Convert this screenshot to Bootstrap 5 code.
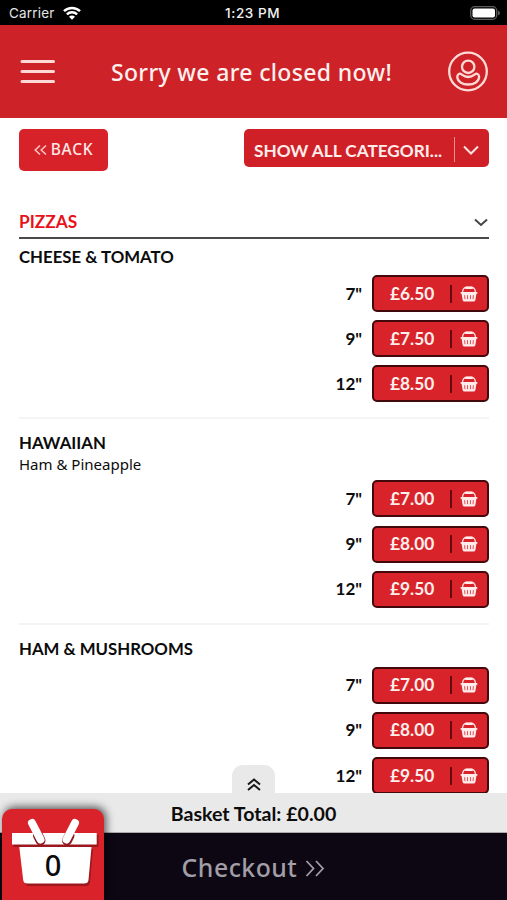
<!DOCTYPE html>
<html lang="en">
<head>
<meta charset="utf-8">
<meta name="viewport" content="width=device-width, initial-scale=1">
<title>Menu</title>
<link href="https://cdn.jsdelivr.net/npm/bootstrap@5.3.0/dist/css/bootstrap.min.css" rel="stylesheet">
<style>
body{font-family:Lato,sans-serif;color:#0c0c0c;background:#fff}
.screen{height:900px}
.humanist{font-family:"Noto Sans","Open Sans",sans-serif}
.status{height:25px;background:#000;color:#e4e4e4;font:13.5px/25px Inter,sans-serif;letter-spacing:.2px;padding:1px 7px 0 9px}
.clock{color:#f2f2f2;font-weight:500;left:225px;top:1px;letter-spacing:.6px}
.topbar{height:93px;background:#cd2228;padding:0 18px 0 20px}
.topbar h1{font-size:23px;letter-spacing:.35px;color:#fff0ee;font-weight:500;line-height:30px}
.page{padding:11px 18px 0 19px;min-height:0}
.btn-back{width:89px;height:42px;background:#d8222a;color:#ffe9e7;border-radius:5px;font-size:15.5px;font-weight:500;letter-spacing:.7px}
.pick{width:245px;height:38px;background:#cf2027;color:#ffedeb;border-radius:5px;font-size:17.2px;font-weight:700;padding:3px 10px 0 10px}
.pick .text-nowrap{padding-top:3px}
.pick .rule{width:1px;height:25px;background:#ee8e8e}
.cat{margin-top:40px;height:28px;border-bottom:2px solid #4a4a4a;color:#e8131a;font-size:17.3px;font-weight:700;padding:0 1px 4px 0}
.dish{padding:13px 0 15px;border-bottom:2px solid #f4f4f4}
.dish:first-child{padding-top:7px}
.dish h3{font-size:16.8px;line-height:22px;font-weight:700;margin:0}
.dish p{font-size:15px;line-height:23px;margin:-1px 0 -3px}
.sizes{margin-top:7px;gap:8.2px}
.size-row{gap:10px;font-size:17px;font-weight:700;line-height:20px}
.price{width:117px;height:37px;background:#d9232a;border:2px solid #42090c;border-radius:5px;color:#fff0ee;padding:0 9px 0 16px;font-size:17.3px;font-weight:700}
.price .rule{width:2px;height:18px;background:#650b10}
.total{height:40px;background:#e9e9e9;font-size:19.6px;font-weight:700;border-bottom:1px solid #aaa;padding-top:2px}
.pull{width:43px;height:29px;left:232px;top:-28px;background:#e9e9e9;border-radius:11px 11px 0 0;padding-top:10px}
.checkout{height:67px;background:#0c0713;color:#a29ea6;font-size:24.8px;font-weight:500;letter-spacing:.5px;padding-top:3px}
.tile{left:2px;bottom:0;width:102px;height:91px;background:#d9222a;border-radius:10px 10px 0 0;box-shadow:2px -2px 9px rgba(0,0,0,.65)}
.count{left:0;width:102px;top:37px;font-size:29px;font-weight:500;line-height:38px;color:#0a0a0a}
</style>
<script src="https://cdn.jsdelivr.net/npm/bootstrap@5.3.0/dist/js/bootstrap.bundle.min.js"></script>
</head>
<body>
<svg width="0" height="0" class="position-absolute" aria-hidden="true">
  <symbol id="basket" viewBox="0 0 18 16">
    <path d="M2.500 6.500C2.700 3 4.500 1.500 6.500 1.500h5c2 0 3.800 1.500 4 5" fill="none" stroke="#ffdcd9" stroke-width="1.300"/>
    <rect x="5" y=".4" width="8" height="2.600" rx="1.200" fill="#ffeceb"/>
    <path d="M1.300 6h15.400q.8 0 .8.900t-.8.900h-.3l-1 6.300q-.2 1.400-1.400 1.400H4q-1.200 0-1.400-1.400l-1-6.300h-.3q-.8 0-.8-.9t.8-.9z" fill="#ffeceb"/>
    <path d="M4.600 9.200l.4 4M7.500 9.200l.1 4M10.500 9.200l-.1 4M13.400 9.200l-.4 4" stroke="#df5055" stroke-width="1"/>
  </symbol>
</svg>
<div class="screen d-flex flex-column overflow-hidden position-relative">
  <div class="status d-flex align-items-center justify-content-between flex-shrink-0 position-relative">
    <span class="d-flex align-items-center"><span>Carrier</span>
      <svg class="ms-2" width="18" height="14" viewBox="0 0 18 14" fill="none" stroke="#fff" stroke-width="2.500"><path d="M1 5.200a11.300 11.300 0 0 1 16 0M3.900 8.400a7.200 7.200 0 0 1 10.200 0"/><path d="M9 13.700 6 10.700a4.200 4.200 0 0 1 6 0z" fill="#fff" stroke="none"/></svg></span>
    <span class="clock position-absolute">1:23 PM</span>
    <svg width="30" height="14" viewBox="0 0 30 14"><rect x=".7" y=".7" width="26" height="12.600" rx="4" fill="none" stroke="#5c5c5c" stroke-width="1.300"/><rect x="2.500" y="2.500" width="22.500" height="9" rx="2" fill="#fff"/><path d="M28 4.500q2 1 2 2.500t-2 2.500z" fill="#5c5c5c"/></svg>
  </div>
  <header class="topbar d-flex align-items-center justify-content-between flex-shrink-0">
    <svg width="36" height="26" viewBox="0 0 36 26" stroke="#ffd9d6" stroke-width="3" stroke-linecap="round"><path d="M2 2.500h31.500M2 12.500h31.500M2 22.500h31.500"/></svg>
    <h1 class="humanist m-0">Sorry we are closed now!</h1>
    <svg width="42" height="42" viewBox="0 0 42 42" fill="none" stroke="#ffd9d6" stroke-width="2.300"><circle cx="21" cy="20.500" r="18.800"/><circle cx="21.200" cy="15.800" r="6.200"/><path d="M13 22.600c-1.600 0-2.700 1.700-2.700 3.500 0 4.400 5 7.400 10.900 7.400s10.900-3 10.900-7.400c0-1.800-1.100-3.500-2.700-3.500-1.700 0-3 3.400-8.200 3.400s-6.500-3.400-8.200-3.400z"/></svg>
  </header>
  <main class="page flex-grow-1 overflow-hidden">
    <div class="d-flex justify-content-between align-items-start">
      <button class="btn-back humanist btn border-0 p-0 d-flex align-items-center justify-content-center"><svg class="me-1" width="13" height="12" viewBox="0 0 13 12" fill="none" stroke="#ffc9c6" stroke-width="1.500"><path d="M6 1.500 1.200 6 6 10.500M12 1.500 7.200 6l4.800 4.500"/></svg>BACK</button>
      <button class="pick btn border-0 d-flex align-items-center"><span class="text-nowrap">SHOW ALL CATEGORI...</span><span class="rule ms-auto me-2"></span><svg width="16" height="10" viewBox="0 0 16 10" fill="none" stroke="#ffe3e1" stroke-width="2"><path d="m1 1.500 7 7 7-7"/></svg></button>
    </div>
    <div class="cat d-flex align-items-center justify-content-between"><span>PIZZAS</span><svg width="14" height="9" viewBox="0 0 14 9" fill="none" stroke="#444" stroke-width="2"><path d="m1 1.500 6 5.500 6-5.500"/></svg></div>
    <section>
      <article class="dish">
        <h3>CHEESE &amp; TOMATO</h3>
        <div class="sizes d-flex flex-column">
          <div class="size-row d-flex align-items-center justify-content-end"><span>7"</span><button class="price btn d-flex align-items-center"><span>£6.50</span><span class="rule ms-auto me-2"></span><svg width="18" height="16"><use href="#basket"/></svg></button></div>
          <div class="size-row d-flex align-items-center justify-content-end"><span>9"</span><button class="price btn d-flex align-items-center"><span>£7.50</span><span class="rule ms-auto me-2"></span><svg width="18" height="16"><use href="#basket"/></svg></button></div>
          <div class="size-row d-flex align-items-center justify-content-end"><span>12"</span><button class="price btn d-flex align-items-center"><span>£8.50</span><span class="rule ms-auto me-2"></span><svg width="18" height="16"><use href="#basket"/></svg></button></div>
        </div>
      </article>
      <article class="dish">
        <h3>HAWAIIAN</h3>
        <p class="humanist">Ham &amp; Pineapple</p>
        <div class="sizes d-flex flex-column">
          <div class="size-row d-flex align-items-center justify-content-end"><span>7"</span><button class="price btn d-flex align-items-center"><span>£7.00</span><span class="rule ms-auto me-2"></span><svg width="18" height="16"><use href="#basket"/></svg></button></div>
          <div class="size-row d-flex align-items-center justify-content-end"><span>9"</span><button class="price btn d-flex align-items-center"><span>£8.00</span><span class="rule ms-auto me-2"></span><svg width="18" height="16"><use href="#basket"/></svg></button></div>
          <div class="size-row d-flex align-items-center justify-content-end"><span>12"</span><button class="price btn d-flex align-items-center"><span>£9.50</span><span class="rule ms-auto me-2"></span><svg width="18" height="16"><use href="#basket"/></svg></button></div>
        </div>
      </article>
      <article class="dish">
        <h3>HAM &amp; MUSHROOMS</h3>
        <div class="sizes d-flex flex-column">
          <div class="size-row d-flex align-items-center justify-content-end"><span>7"</span><button class="price btn d-flex align-items-center"><span>£7.00</span><span class="rule ms-auto me-2"></span><svg width="18" height="16"><use href="#basket"/></svg></button></div>
          <div class="size-row d-flex align-items-center justify-content-end"><span>9"</span><button class="price btn d-flex align-items-center"><span>£8.00</span><span class="rule ms-auto me-2"></span><svg width="18" height="16"><use href="#basket"/></svg></button></div>
          <div class="size-row d-flex align-items-center justify-content-end"><span>12"</span><button class="price btn d-flex align-items-center"><span>£9.50</span><span class="rule ms-auto me-2"></span><svg width="18" height="16"><use href="#basket"/></svg></button></div>
        </div>
      </article>
    </section>
  </main>
  <footer class="flex-shrink-0 position-relative">
    <div class="total d-flex align-items-center justify-content-center position-relative">
      <span class="pull position-absolute d-flex align-items-center justify-content-center"><svg width="14" height="13" viewBox="0 0 14 13" fill="none" stroke="#171717" stroke-width="2"><path d="m1 6.500 6-5 6 5M1 12l6-5 6 5"/></svg></span>
      <span>Basket Total: £0.00</span>
    </div>
    <div class="checkout humanist d-flex align-items-center justify-content-center"><span>Checkout</span><svg class="ms-2" width="20" height="17" viewBox="0 0 20 17" fill="none" stroke="#a29ea6" stroke-width="1.800"><path d="m1.500 1 7 7.500-7 7.500M11 1l7 7.500-7 7.500"/></svg></div>
    <div class="tile position-absolute">
      <svg class="d-block" width="102" height="91" viewBox="0 0 102 91">
        <g fill="#6b1014" opacity=".55" transform="translate(1.500 2)"><path d="M10 24h85v12H10zM17.500 38h72l-3 33.500q-.4 3.500-4.500 3.500H26q-4 0-4.500-3.500z"/></g>
        <path d="M10 24h84.700v11.500H10z" fill="#fff"/>
        <path d="M17.300 38h72.200l-3 33q-.4 3.500-4.500 3.500H25.500q-4 0-4.300-3.500z" fill="#fff"/>
        <g stroke-linecap="round" fill="none"><path d="m36 26.500 2.500 5M67.500 26.500l-2.500 5" stroke="#8f1a20" stroke-width="10"/><path d="m30 14 8.500 16.500M73 14l-8.500 16.500" stroke="#fff" stroke-width="8"/></g>
      </svg>
      <span class="count humanist position-absolute text-center">0</span>
    </div>
  </footer>
</div>
</body>
</html>
